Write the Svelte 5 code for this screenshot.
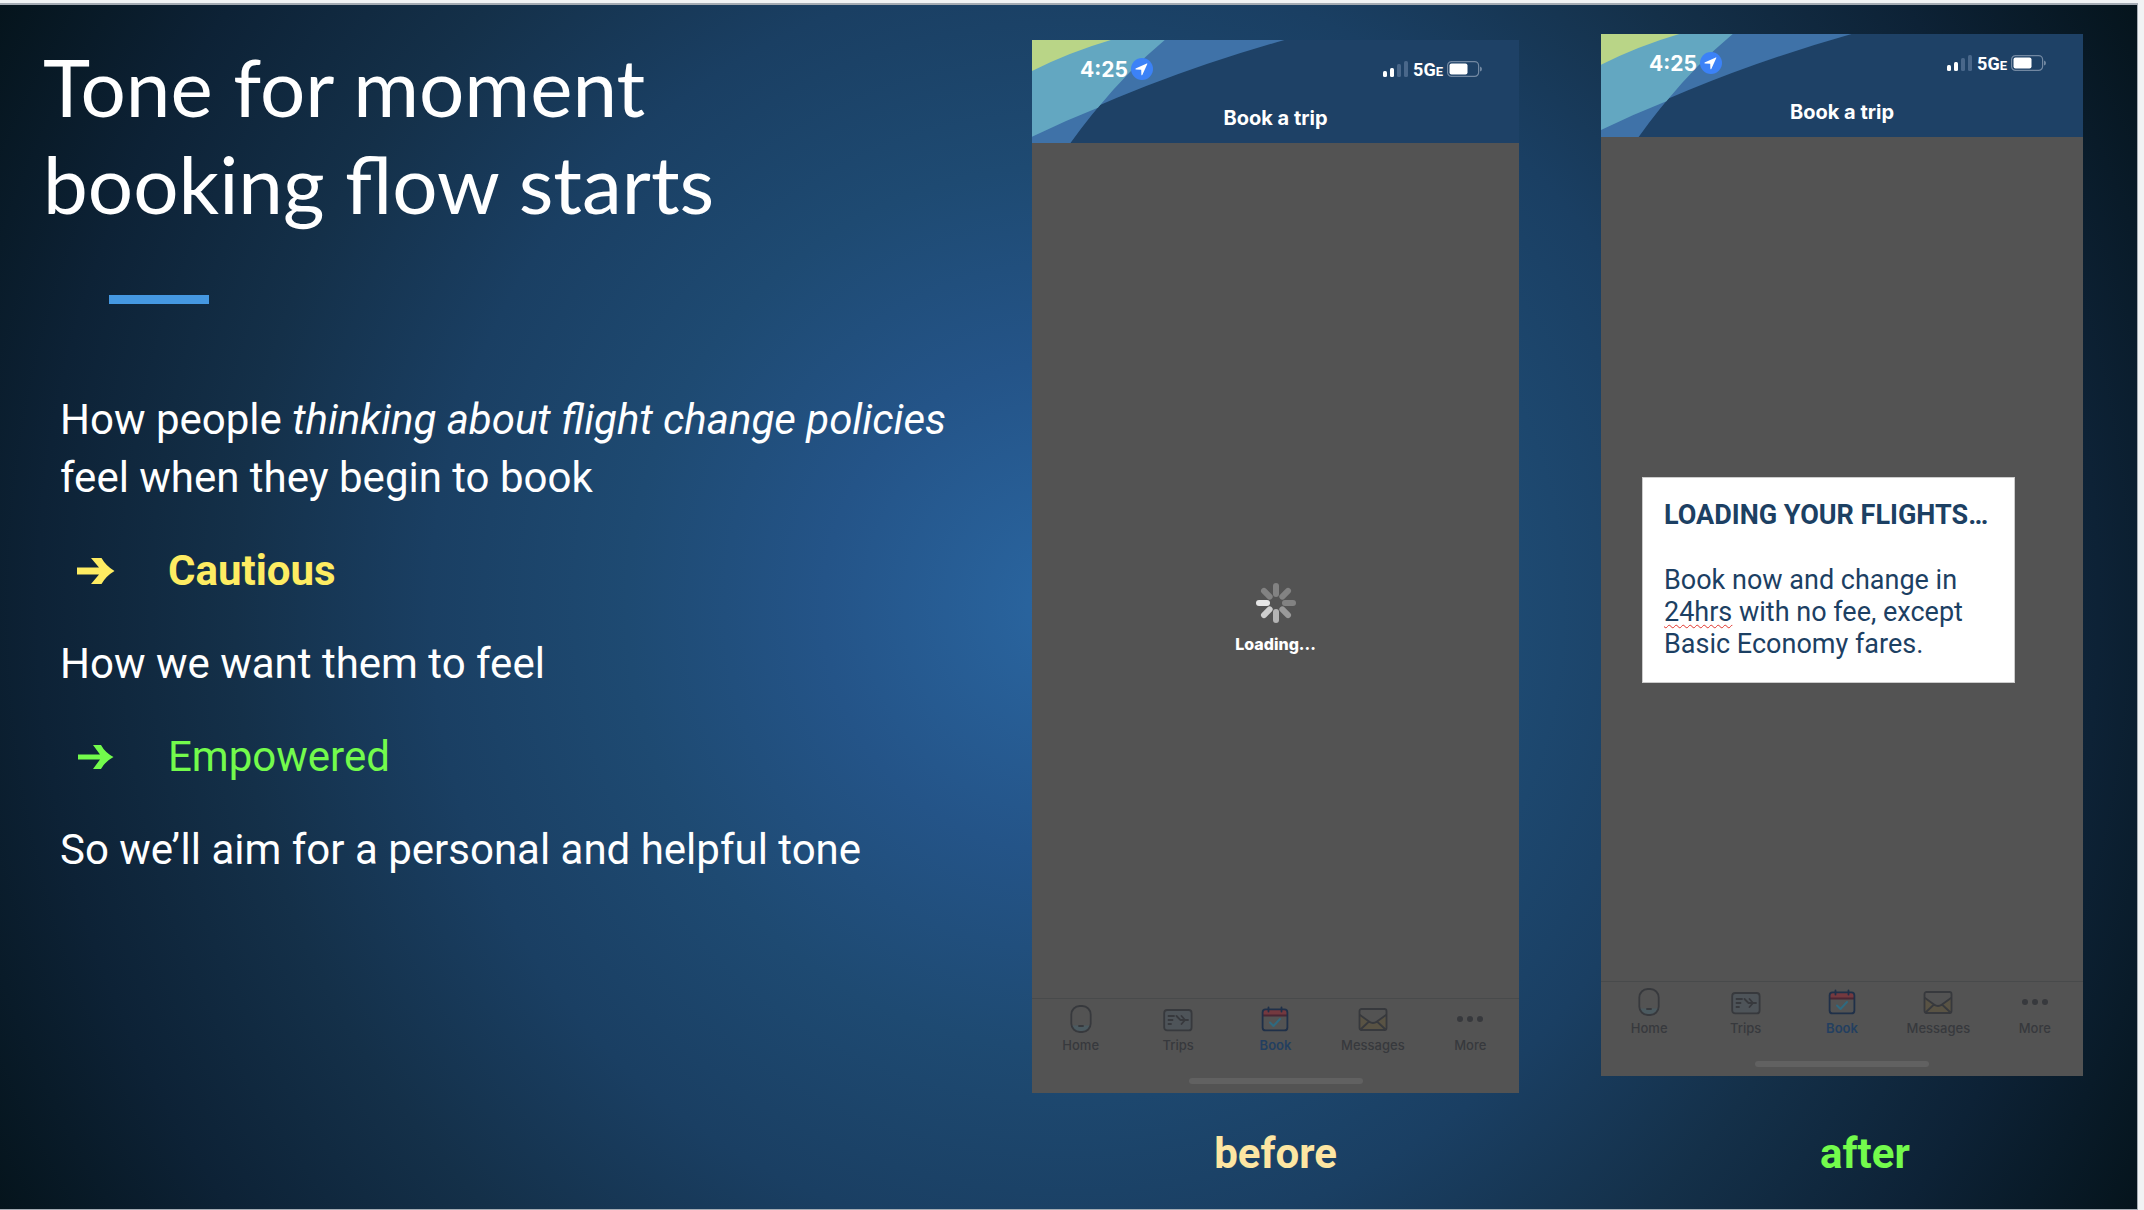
<script lang="ts">
	interface Tab {
		id: string;
		label: string;
	}

	const tabs: Tab[] = [
		{id: 'home', label: 'Home'},
		{id: 'trips', label: 'Trips'},
		{id: 'book', label: 'Book'},
		{id: 'messages', label: 'Messages'},
		{id: 'more', label: 'More'},
	];

	let before_tab = $state('book');
	let after_tab = $state('book');

	// clockwise from 12 o'clock
	const spokes = ['#828282', '#828282', '#828282', '#999999', '#b4b4b4', '#cecece', '#e6e6e6', '#828282'];
</script>

{#snippet arrow(bold: boolean)}
	<svg class="arrow" viewBox="0 0 38 28" aria-hidden="true">
		{#if bold}
			<path d="M0 10.5H22L14 1H24.5Q29 9 37.5 14Q29 19 24.5 27H14L22 17.5H0Z" />
		{:else}
			<path d="M1 11.5H23L16 2H24Q28 9.5 36.5 14Q28 18.5 24 26H16L23 16.5H1Z" />
		{/if}
	</svg>
{/snippet}

{#snippet top_bar()}
	<header class="top_bar">
		<svg class="swoosh" viewBox="0 0 488 104" preserveAspectRatio="xMinYMin slice" aria-hidden="true">
			<path fill="#3f72a8" d="M0 0H253Q115 39 0 97Z" />
			<path fill="#3f72a8" d="M0 0H133Q80 45 38 104H0Z" />
			<path fill="#63a7c1" d="M0 0H133Q96 31 66 68Q33 81 0 97Z" />
			<path fill="#b9d587" d="M0 0H79Q38 12 0 31Z" />
		</svg>
		<div class="status">
			<span class="clock">4:25</span>
			<svg class="locate" viewBox="0 0 22 22" aria-hidden="true">
				<circle cx="11" cy="11" r="11" fill="#3c82f7" />
				<path fill="#fff" d="M15.8 5.4L4.6 10.6Q4 11.4 5 11.6L10.2 11.8L10.4 16.8Q10.6 17.8 11.3 17L16.3 6Q16.4 5.2 15.8 5.4Z" />
			</svg>
			<svg class="signal" viewBox="0 0 26 16" aria-hidden="true">
				<rect x="0" y="10" width="4" height="6" rx="1.5" fill="#fff" />
				<rect x="7" y="7" width="4" height="9" rx="1.5" fill="#fff" />
				<rect x="14" y="3" width="4" height="13" rx="1.5" fill="#49678a" />
				<rect x="21" y="0" width="4" height="16" rx="1.5" fill="#49678a" />
			</svg>
			<span class="network">5G<small>E</small></span>
			<svg class="battery" viewBox="0 0 36 16" aria-hidden="true">
				<rect x="0.6" y="0.6" width="31" height="14.8" rx="4" fill="none" stroke="#7288a2" stroke-width="1.2" />
				<rect x="2.5" y="2.5" width="18" height="11" rx="2" fill="#fff" />
				<path d="M33 5.5Q35 6 35 8Q35 10 33 10.5Z" fill="#7288a2" />
			</svg>
		</div>
		<h2>Book a trip</h2>
	</header>
{/snippet}

{#snippet icon(id: string)}
	<svg
		class="icon"
		viewBox="0 0 32 30"
		fill="none"
		stroke="#37393d"
		stroke-width="1.8"
		stroke-linecap="round"
		stroke-linejoin="round"
		aria-hidden="true"
	>
		{#if id === 'home'}
			<path d="M6.6 21.5H25.4Q24 27.5 16 27.8Q8 27.5 6.6 21.5Z" fill="#4b5a60" stroke="none" />
			<rect x="6.3" y="2" width="19.4" height="26" rx="8.5" />
			<path d="M14 22H18" />
		{:else if id === 'trips'}
			<rect x="2.2" y="6" width="27.4" height="20.4" rx="3" fill="#4e5459" />
			<path d="M6.5 12H12M6.5 16H10.5M6.5 20H9M14.5 12L18.5 16H26M19.5 12L23 16L19.5 20" />
		{:else if id === 'book'}
			<path d="M4 11V8Q4 5.5 6.5 5.5H25.5Q28 5.5 28 8V11Z" fill="#74393f" stroke="none" />
			<g stroke="#1f3049">
				<path d="M4 11.5H28" stroke="#4a2734" />
				<rect x="3.6" y="5.4" width="24.8" height="21" rx="3" />
				<path d="M9.5 3.5V7.5M22.5 3.5V7.5" />
			</g>
			<path d="M11 18.5L14.5 22L21 15" stroke="#2f6a80" stroke-width="2" />
		{:else if id === 'messages'}
			<path d="M3 11L12 17.5Q16 20.5 20 17.5L29 11V26H3Z" fill="#595344" stroke="none" />
			<rect x="2.5" y="5" width="27" height="21" rx="2" />
			<path d="M3 11L12 17.5Q16 20.5 20 17.5L29 11M3.5 25.5L12 17.5M28.5 25.5L20 17.5" />
		{:else}
			<g fill="#37393d" stroke="none">
				<circle cx="6" cy="15" r="3" />
				<circle cx="16" cy="15" r="3" />
				<circle cx="26" cy="15" r="3" />
			</g>
		{/if}
	</svg>
{/snippet}

{#snippet tab_bar(current: string, select: (id: string) => void)}
	<nav class="tab_bar">
		<div class="tabs">
			{#each tabs as tab (tab.id)}
				<button class:selected={tab.id === current} onclick={() => select(tab.id)}>
					{@render icon(tab.id)}
					{tab.label}
				</button>
			{/each}
		</div>
		<div class="home_indicator"></div>
	</nav>
{/snippet}

<main class="frame">
	<div class="slide">
		<section class="notes">
			<h1>Tone for moment<br />booking flow starts</h1>
			<hr />
			<div class="points">
				<p>How people <em>thinking about flight change policies</em><br />feel when they begin to book</p>
				<ul class="cautious">
					<li>{@render arrow(true)}<strong>Cautious</strong></li>
				</ul>
				<p>How we want them to feel</p>
				<ul class="empowered">
					<li>{@render arrow(false)}Empowered</li>
				</ul>
				<p>So we’ll aim for a personal and helpful tone</p>
			</div>
		</section>

		<figure class="before">
			<div class="phone">
				{@render top_bar()}
				<div class="screen loading">
					<svg class="spinner" viewBox="-20 -20 40 40" aria-hidden="true">
						{#each spokes as color, i (i)}
							<rect x="-3" y="-20" width="6" height="14" rx="3" fill={color} transform="rotate({i * 45})" />
						{/each}
					</svg>
					<span>Loading...</span>
				</div>
				{@render tab_bar(before_tab, (id) => (before_tab = id))}
			</div>
			<figcaption>before</figcaption>
		</figure>

		<figure class="after">
			<div class="phone">
				{@render top_bar()}
				<div class="screen">
					<div class="card">
						<h3>LOADING YOUR FLIGHTS…</h3>
						<p>Book now and change in<br /><span class="misspelled">24hrs</span> with no fee, except<br />Basic Economy fares.</p>
					</div>
				</div>
				{@render tab_bar(after_tab, (id) => (after_tab = id))}
			</div>
			<figcaption>after</figcaption>
		</figure>
	</div>
</main>

<style>
	:global(body) {
		background: #f1f3f4;
	}
	.frame {
		box-sizing: border-box;
		display: flex;
		min-height: 100vh;
		padding: 3px 6px 0 0;
		font-family: Roboto, sans-serif;
		color: #fff;
	}
	.slide {
		flex: 1;
		display: grid;
		grid-template-columns: 1032fr 487fr 82fr 482fr 54fr;
		border: solid #a4abb3;
		border-width: 2px 1px 1px 0;
		background: radial-gradient(
			circle farthest-corner at 50% 50%,
			#2a66a1 0%,
			#245488 20%,
			#1e4a72 36%,
			#1a3f63 52%,
			#143049 68%,
			#0d2236 84%,
			#05141c 100%
		);
	}
	.notes {
		grid-column: 1;
		padding: 33px 0 0 43px;
	}
	h1 {
		margin: 0;
		font: 400 80px/97px Lato, sans-serif;
	}
	hr {
		width: 100px;
		height: 9px;
		margin: 63px 0 0 66px;
		border: 0;
		background: #4598e1;
	}
	.points {
		margin: 87px 0 0 17px;
		font-size: 42px;
		line-height: 58px;
	}
	.points p,
	.points ul {
		margin: 0 0 35px;
		padding: 0;
		list-style: none;
	}
	li {
		display: flex;
		align-items: center;
		gap: 53px;
		padding-left: 17px;
	}
	.arrow {
		width: 38px;
		height: 28px;
		fill: currentColor;
	}
	.cautious {
		color: #feec62;
	}
	.empowered {
		color: #73fb4c;
	}

	figure {
		display: flex;
		flex-direction: column;
		margin: 0;
	}
	.before {
		grid-column: 2;
		padding-top: 35px;
	}
	.after {
		grid-column: 4;
		padding-top: 29px;
	}
	figcaption {
		margin-top: auto;
		padding-bottom: 30px;
		font-size: 42px;
		font-weight: 700;
		line-height: 50px;
		text-align: center;
	}
	.before figcaption {
		color: #fde6a2;
	}
	.after figcaption {
		padding-left: 46px;
		color: #73fb4c;
	}

	.phone {
		display: flex;
		flex-direction: column;
		aspect-ratio: 487 / 1053;
		background: #535353;
		font-family: Inter, sans-serif;
	}
	.top_bar {
		position: relative;
		height: 103px;
		background: #1e4166;
	}
	.swoosh {
		position: absolute;
		inset: 0;
		width: 100%;
		height: 100%;
	}
	.status {
		position: relative;
		display: flex;
		align-items: center;
		height: 58px;
		padding: 0 36px 0 48px;
	}
	.clock {
		font-size: 21px;
		font-weight: 700;
	}
	.locate {
		width: 22px;
		height: 22px;
		margin-left: 3px;
	}
	.signal {
		width: 26px;
		height: 16px;
		margin-left: auto;
	}
	.network {
		margin: 0 4px;
		font: 700 18px Roboto, sans-serif;
	}
	.network small {
		font-size: 13px;
	}
	.battery {
		width: 36px;
		height: 16px;
	}
	h2 {
		position: relative;
		margin: 7px 0 0;
		font-size: 20px;
		font-weight: 700;
		line-height: 26px;
		text-align: center;
	}
	.screen {
		flex: 1;
		display: flex;
		flex-direction: column;
		align-items: flex-start;
	}
	.loading {
		align-items: center;
		gap: 11px;
		padding-top: 440px;
		font-size: 16px;
		font-weight: 800;
		line-height: 20px;
	}
	.spinner {
		width: 40px;
		height: 40px;
	}
	.card {
		box-sizing: border-box;
		width: 373px;
		margin: 340px 0 0 41px;
		padding: 21px 21px 22px;
		border: 1px solid #ccc;
		background: #fff;
		color: #1c4063;
		font-family: Roboto, sans-serif;
		font-size: 27px;
		line-height: 32px;
		white-space: nowrap;
	}
	.card h3 {
		margin: 0 0 33px;
		font-size: 27px;
		font-weight: 700;
	}
	.card p {
		margin: 0;
	}
	.misspelled {
		text-decoration: underline wavy #e0342b 1px;
		text-underline-offset: 3px;
	}

	.tab_bar {
		display: flex;
		flex-direction: column;
		box-sizing: border-box;
		height: 95px;
		padding: 5px 0 9px;
		border-top: 1px solid #484a4b;
	}
	.tabs {
		display: grid;
		grid-template-columns: repeat(5, 1fr);
	}
	button {
		display: flex;
		flex-direction: column;
		align-items: center;
		gap: 2px;
		padding: 0;
		border: 0;
		background: none;
		color: #37393d;
		font: 500 13px/18px Inter, sans-serif;
		cursor: pointer;
	}
	button.selected {
		color: #233f60;
		font-weight: 600;
	}
	.icon {
		width: 32px;
		height: 30px;
	}
	.home_indicator {
		width: 174px;
		height: 6px;
		margin: auto auto 0;
		border-radius: 3px;
		background: #616161;
	}
</style>
